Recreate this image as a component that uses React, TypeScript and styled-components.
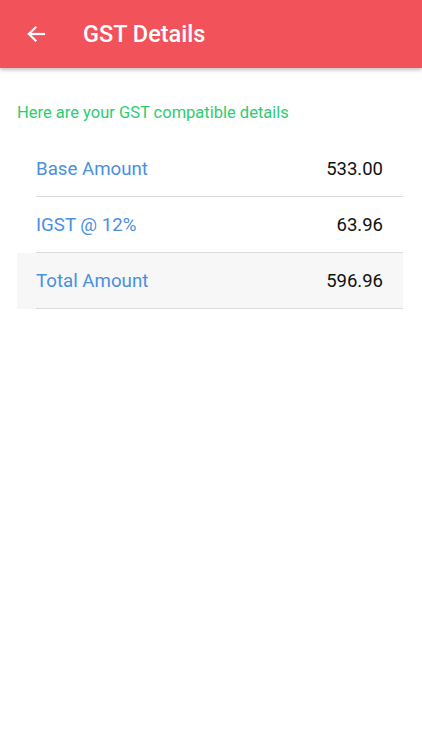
import styled, { createGlobalStyle } from "styled-components";

const GlobalStyle = createGlobalStyle`
    body {
        margin: 0;
        background: #ffffff;
        font-family: Roboto, "Liberation Sans", sans-serif;
    }
`

const Page = styled.div`
    display: flex;
    flex-direction: column;
    min-height: 750px;
`

const Header = styled.header`
    display: flex;
    align-items: center;
    height: 68px;
    padding: 0 0 0 24px;
    background: #f25259;
    box-shadow: 0 2px 4px rgba(0, 0, 0, 0.25);
    gap: 35px;
`

const BackButton = styled.button`
    all: unset;
    display: flex;
    width: 24px;
    height: 24px;
    cursor: pointer;
`

const Title = styled.h1`
    margin: 0;
    font-size: 23.5px;
    font-weight: 500;
    color: #ffffff;
`

const Content = styled.main`
    display: flex;
    flex-direction: column;
    padding: 35px 19px 0 17px;
`

const Note = styled.p`
    margin: 0 0 19px 0;
    font-size: 16.5px;
    color: #2ecc71;
`

const Row = styled.div<{ highlighted?: boolean }>`
    padding-left: 19px;
    background: ${({ highlighted }) => (highlighted ? "#f7f7f7" : "transparent")};
`

const RowInner = styled.div`
    display: flex;
    justify-content: space-between;
    align-items: center;
    height: 55px;
    padding-right: 20px;
    border-bottom: 1px solid #dcdcdc;
`

const Label = styled.span`
    font-size: 18.7px;
    color: #4a8fe0;
`

const Value = styled.span`
    font-size: 18.5px;
    color: #111111;
`

const rows = [
    { label: "Base Amount", value: "533.00" },
    { label: "IGST @ 12%", value: "63.96" },
    { label: "Total Amount", value: "596.96", total: true },
]

export default function App() {
    return (
        <Page>
            <GlobalStyle />
            <Header>
                <BackButton aria-label="Back">
                    <svg width="24" height="24" viewBox="0 0 24 24" fill="none" stroke="#ffffff" strokeWidth="2.2" strokeLinecap="square">
                        <path d="M20 12H5" />
                        <path d="M11.5 5.5L5 12l6.5 6.5" />
                    </svg>
                </BackButton>
                <Title>GST Details</Title>
            </Header>
            <Content>
                <Note>Here are your GST compatible details</Note>
                {rows.map((row) => (
                    <Row key={row.label} highlighted={row.total}>
                        <RowInner>
                            <Label>{row.label}</Label>
                            <Value>{row.value}</Value>
                        </RowInner>
                    </Row>
                ))}
            </Content>
        </Page>
    );
}
